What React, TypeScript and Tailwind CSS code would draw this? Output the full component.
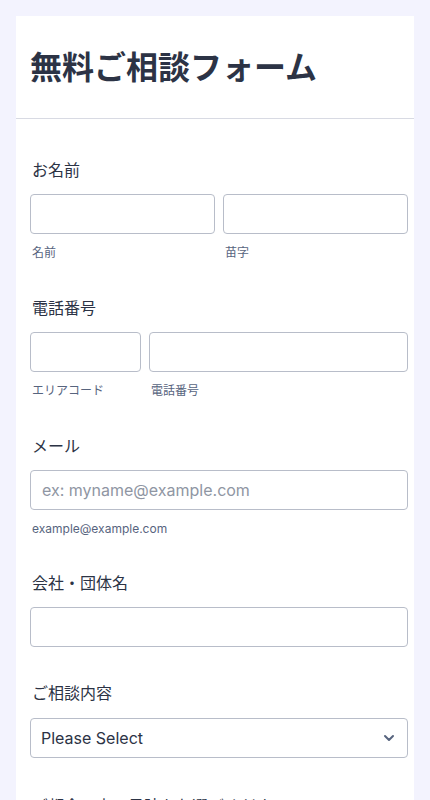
import { ChevronDown } from "lucide-react";

const FONT = "font-['Inter','Noto_Sans_CJK_JP',sans-serif]";

function Label({ children }: { children: React.ReactNode }) {
  return <p className="h-5 text-[16px] leading-5 font-normal text-[#2c3345] pl-[2px]">{children}</p>;
}

function Field({ className = "", placeholder }: { className?: string; placeholder?: string }) {
  return (
    <input
      type="text"
      placeholder={placeholder}
      className={`h-10 rounded-[4px] border border-[#b8bdc9] bg-white px-[11px] text-[16px] text-[#2c3345] placeholder:text-[#8f96a3] outline-none ${className}`}
    />
  );
}

function Sub({ children, className = "" }: { children: React.ReactNode; className?: string }) {
  return <p className={`mt-[11px] h-4 text-[12px] leading-4 text-[#57647e] pl-[2px] ${className}`}>{children}</p>;
}

export default function App() {
  return (
    <div className={`min-h-[800px] bg-[#f3f3fe] px-4 pt-4 ${FONT}`}>
      <div className="bg-white min-h-[784px]">
        <div className="h-[103px] border-b border-[#d8dae3] pl-[14px] flex items-center">
          <h1 className="text-[32px] leading-10 font-bold text-[#2c3345] mt-[2px]">無料ご相談フォーム</h1>
        </div>

        <div className="pl-[14px] pr-[6px]">
          <section className="pt-[41px]">
            <Label>お名前</Label>
            <div className="mt-[14px] flex gap-2">
              <div className="flex-1 flex flex-col">
                <Field className="w-full" />
                <Sub>名前</Sub>
              </div>
              <div className="flex-1 flex flex-col">
                <Field className="w-full" />
                <Sub>苗字</Sub>
              </div>
            </div>
          </section>

          <section className="pt-[37px]">
            <Label>電話番号</Label>
            <div className="mt-[14px] flex gap-2">
              <div className="w-[111px] flex flex-col">
                <Field className="w-full" />
                <Sub>エリアコード</Sub>
              </div>
              <div className="flex-1 flex flex-col">
                <Field className="w-full" />
                <Sub>電話番号</Sub>
              </div>
            </div>
          </section>

          <section className="pt-[37px]">
            <Label>メール</Label>
            <div className="mt-[14px] flex flex-col">
              <Field className="w-full" placeholder="ex: myname@example.com" />
              <Sub className="text-[#2c3345]">example@example.com</Sub>
            </div>
          </section>

          <section className="pt-[36px]">
            <Label>会社・団体名</Label>
            <div className="mt-[14px]">
              <Field className="w-full" />
            </div>
          </section>

          <section className="pt-[36px]">
            <Label>ご相談内容</Label>
            <div className="mt-[15px] relative h-10 rounded-[4px] border border-[#b8bdc9] flex items-center px-[10px]">
              <span className="text-[16px] text-[#2c3345]">Please Select</span>
              <ChevronDown className="absolute right-[10px] top-[11px] w-4 h-4 text-[#57647e]" strokeWidth={3} />
            </div>
          </section>

          <section className="pt-[38px]">
            <Label>ご都合の良い日時をお選びください</Label>
          </section>
        </div>
      </div>
    </div>
  );
}
